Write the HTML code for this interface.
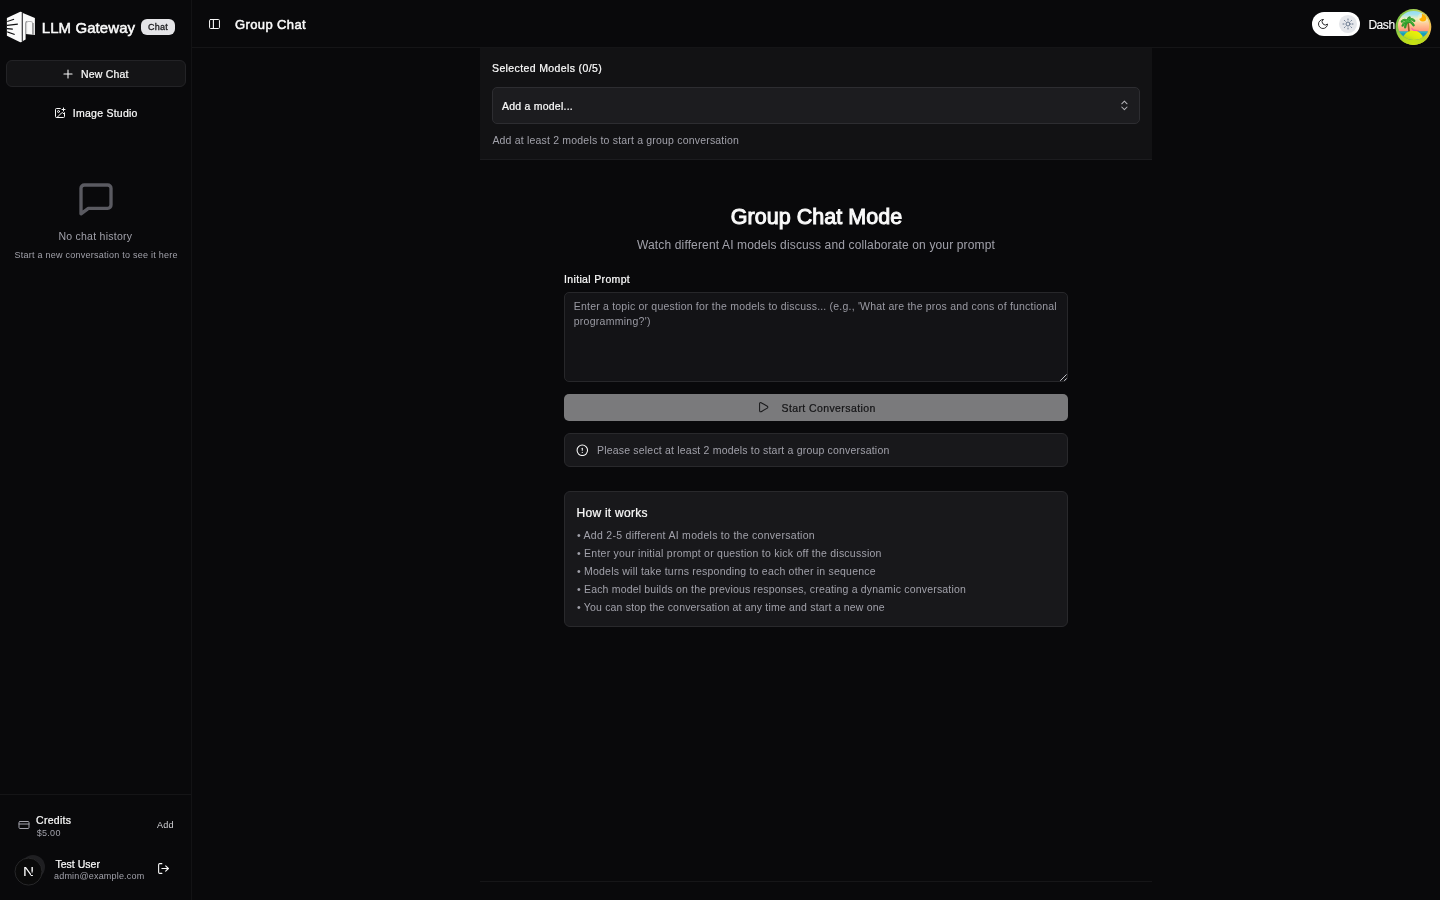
<!DOCTYPE html>
<html lang="en">
<head>
<meta charset="utf-8">
<title>Group Chat - LLM Gateway</title>
<style>
*{box-sizing:border-box;margin:0;padding:0}
html,body{width:1440px;height:900px;overflow:hidden;background:#09090b;color:#fafafa;
  font-family:"Liberation Sans",Arial,sans-serif;-webkit-font-smoothing:antialiased}
#root{position:absolute;left:0;top:0;width:1440px;height:900px;will-change:transform}
.abs{position:absolute}
.med{-webkit-text-stroke-width:0.22px}
.semi{-webkit-text-stroke-width:0.5px}
.t{position:absolute;white-space:nowrap;line-height:1}
.muted{color:#a1a1aa}
svg{display:block}
/* sidebar */
#sidebar{position:absolute;left:0;top:0;width:192px;height:900px;border-right:1px solid #131315;background:#09090b}
#header{position:absolute;left:192px;top:0;width:1248px;height:48px;border-bottom:1px solid #151517}
.badge{position:absolute;left:141px;top:18.7px;width:33.7px;height:16.3px;border-radius:6px;background:#e4e4e7;color:#202023;letter-spacing:0.3px;padding-left:0.3px;
  font-size:9px;-webkit-text-stroke-width:0.3px;text-align:center;line-height:16px}
#newchat{position:absolute;left:6px;top:60px;width:180px;height:27px;border:1px solid #232326;border-radius:6px;background:#141416}
#panel{position:absolute;left:480px;top:48px;width:672px;height:112px;background:#121214;border-bottom:1px solid #1c1c1f}
#select{position:absolute;left:492px;top:87px;width:648px;height:37px;border:1px solid #2d2d31;border-radius:5px;background:#1c1c1f}
#ta{position:absolute;left:564px;top:292px;width:504px;height:90px;border:1px solid #27272a;border-radius:5px;background:#131316}
#startbtn{position:absolute;left:564px;top:394px;width:504px;height:27px;border-radius:5px;background:#7a7a7c}
#alert{position:absolute;left:564px;top:433px;width:504px;height:34px;border:1px solid #29292c;border-radius:6px;background:#18181b}
#how{position:absolute;left:564px;top:491px;width:504px;height:136px;border:1px solid #29292c;border-radius:6px;background:#18181b}
#botline{position:absolute;left:480px;top:881px;width:672px;height:1px;background:#161618}
#sbfoot{position:absolute;left:0;top:794px;width:191px;height:1px;background:#151517}
</style>
</head>
<body>
<div id="root">
<div id="sidebar">
  <!-- logo -->
  <svg class="abs" style="left:0;top:0" width="48" height="48" viewBox="0 0 48 48">
    <path d="M6.9 17.9 L20.2 11.8 L21.85 12 L21.85 42 L20.2 42.2 L6.9 35.7 Z" fill="#fafafa"/>
    <rect x="21.85" y="12.2" width="1.05" height="29.6" fill="#3a3a3c"/>
    <path d="M22.9 12.9 L34.9 18.1 L34.9 35 L25.6 33.9 L25.6 39.6 L22.9 40.9 Z" fill="#fafafa"/>
    <path d="M25.8 33.9 V23.2 Q25.8 21.6 27.4 21.5" fill="none" stroke="#909092" stroke-width="1.3"/>
    <path d="M27.4 21.5 H30.6 Q32.2 21.6 32.7 22.8" fill="none" stroke="#b4b4b6" stroke-width="1.1"/>
    <path d="M32.95 23 V34.8" fill="none" stroke="#7c7c7e" stroke-width="1.4"/>
    <path d="M26.7 33.9 V23.4 Q26.7 22.4 27.6 22.4" fill="none" stroke="#d4d4d6" stroke-width="0.8"/>
    <g fill="#0c0c0e">
      <path d="M7.2 20.9 L13.9 18.7 L14.2 19.7 L7.2 22.1 Z"/>
      <path d="M7.0 24.7 L17.8 23.6 L17.9 24.8 L7.0 26.0 Z"/>
      <path d="M7.0 28.0 L12.8 28.5 L12.8 29.7 L7.0 29.2 Z"/>
      <path d="M7.2 31.2 L14.9 33.9 L14.5 35.0 L7.2 32.6 Z"/>
    </g>
  </svg>
  <div class="t semi" style="left:41.8px;top:20px;font-size:15px;letter-spacing:0.07px">LLM Gateway</div>
  <div class="badge">Chat</div>

  <div id="newchat"></div>
  <svg class="abs" style="left:61.4px;top:67px" width="14" height="14" viewBox="0 0 24 24" fill="none" stroke="#fafafa" stroke-width="1.8" stroke-linecap="round"><path d="M5 12h14M12 5v14"/></svg>
  <div class="t med" style="left:81px;top:69px;font-size:10.5px;letter-spacing:0.186px">New Chat</div>

  <svg class="abs" style="left:54px;top:106.7px" width="12" height="12" viewBox="0 0 24 24" fill="none" stroke="#fafafa" stroke-width="2" stroke-linecap="round" stroke-linejoin="round"><path d="M16 5h6"/><path d="M19 2v6"/><path d="M21 11.5V19a2 2 0 0 1-2 2H5a2 2 0 0 1-2-2V5a2 2 0 0 1 2-2h7.5"/><path d="m21 15-3.086-3.086a2 2 0 0 0-2.828 0L6 21"/><circle cx="9" cy="9" r="2"/></svg>
  <div class="t med" style="left:72.8px;top:108px;font-size:10.5px;letter-spacing:0.254px">Image Studio</div>

  <svg class="abs" style="left:76px;top:179.5px" width="40" height="40" viewBox="0 0 24 24" fill="none" stroke="#5a5a61" stroke-width="2" stroke-linecap="round" stroke-linejoin="round"><path d="M21 15a2 2 0 0 1-2 2H7.4l-4.4 3.3V5a2 2 0 0 1 2-2h14a2 2 0 0 1 2 2z"/></svg>
  <div class="t muted" style="left:58.4px;top:231px;font-size:10.5px;letter-spacing:0.257px">No chat history</div>
  <div class="t muted" style="left:14.4px;top:250.9px;font-size:9px;letter-spacing:0.253px">Start a new conversation to see it here</div>

  <div id="sbfoot"></div>
  <svg class="abs" style="left:18px;top:819px" width="12" height="12" viewBox="0 0 24 24" fill="none" stroke="#a1a1aa" stroke-width="2" stroke-linecap="round" stroke-linejoin="round"><rect width="20" height="14" x="2" y="5" rx="2"/><line x1="2" x2="22" y1="10" y2="10"/></svg>
  <div class="t med" style="left:36px;top:814.5px;font-size:10.5px;letter-spacing:0.3px">Credits</div>
  <div class="t muted" style="left:36.7px;top:829px;font-size:9px;letter-spacing:0.3px">$5.00</div>
  <div class="t" style="left:157px;top:821px;font-size:9px;color:#d4d4d8;letter-spacing:0.3px">Add</div>

  <div class="abs" style="left:21px;top:855px;width:24px;height:24px;border-radius:50%;background:#1f1f22"></div>
  <svg class="abs" style="left:10px;top:852px" width="40" height="40" viewBox="10 852 40 40">
    <circle cx="28.5" cy="871.6" r="13.5" fill="#0a0a0a" stroke="#2a2a2c" stroke-width="0.9"/>
  </svg>
  <div class="t" id="nlogo" style="left:23px;top:865px;font-size:13px;color:#fff;transform-origin:0 0;transform:scaleX(1.18)">N</div>
  <div class="abs" style="left:31px;top:870.5px;width:3.2px;height:4.6px;background:linear-gradient(to bottom,rgba(10,10,10,0),rgba(10,10,10,1) 70%)"></div>
  <div class="t med" style="left:55.4px;top:858.5px;font-size:10.5px;letter-spacing:0.024px">Test User</div>
  <div class="t muted" style="left:54px;top:872px;font-size:9px;letter-spacing:0.187px">admin@example.com</div>
  <svg class="abs" style="left:157px;top:862px" width="13" height="13" viewBox="0 0 24 24" fill="none" stroke="#fafafa" stroke-width="2" stroke-linecap="round" stroke-linejoin="round"><path d="M9 21H5a2 2 0 0 1-2-2V5a2 2 0 0 1 2-2h4"/><polyline points="16 17 21 12 16 7"/><line x1="21" x2="9" y1="12" y2="12"/></svg>
</div>

<div id="header">
  <svg class="abs" style="left:16px;top:18px" width="14" height="12" viewBox="0 0 14 12" fill="none" stroke="#fafafa" stroke-width="1" stroke-linecap="round" stroke-linejoin="round"><rect x="1.55" y="1.5" width="9.9" height="9" rx="1"/><path d="M5.4 1.5v9" stroke-width="1.1"/></svg>
  <div class="t semi" style="left:43.0px;top:18px;font-size:13px;letter-spacing:0.389px">Group Chat</div>
</div>

<!-- theme toggle -->
<div class="abs" style="left:1311.5px;top:11.8px;width:48.3px;height:24.2px;border-radius:12.1px;background:#fff"></div>
<div class="abs" style="left:1339.1px;top:15.1px;width:17.8px;height:17.8px;border-radius:50%;background:#e5e7eb"></div>
<svg class="abs" style="left:1317px;top:17.9px" width="12" height="12" viewBox="0 0 24 24" fill="none" stroke="#18181b" stroke-width="1.8" stroke-linecap="round" stroke-linejoin="round"><path d="M12 3a6 6 0 0 0 9 9 9 9 0 1 1-9-9Z"/></svg>
<svg class="abs" style="left:1342px;top:18px" width="12" height="12" viewBox="0 0 24 24" fill="none" stroke="#64748b" stroke-width="2" stroke-linecap="round" stroke-linejoin="round"><circle cx="12" cy="12" r="4"/><path d="M12 2v2"/><path d="M12 20v2"/><path d="m4.93 4.93 1.41 1.41"/><path d="m17.66 17.66 1.41 1.41"/><path d="M2 12h2"/><path d="M20 12h2"/><path d="m6.34 17.66-1.41 1.41"/><path d="m19.07 4.93-1.41 1.41"/></svg>
<div class="t" style="left:1368.4px;top:18.7px;font-size:12px;letter-spacing:-0.45px;-webkit-text-stroke-width:0.15px">Dash</div>
<!-- avatar -->
<svg class="abs" style="left:1390px;top:4px" width="46" height="46" viewBox="0 0 46 46">
  <defs>
    <linearGradient id="ring" x1="0" y1="0.2" x2="1" y2="0.5"><stop offset="0" stop-color="#74bf3c"/><stop offset="0.45" stop-color="#a9d45a"/><stop offset="1" stop-color="#f4bf52"/></linearGradient>
    <radialGradient id="ringb" cx="0.5" cy="1" r="0.6"><stop offset="0" stop-color="#c9e30e"/><stop offset="0.6" stop-color="#b4db1e" stop-opacity="0.9"/><stop offset="1" stop-color="#b4db1e" stop-opacity="0"/></radialGradient>
    <linearGradient id="sky" x1="0" y1="7" x2="0" y2="36" gradientUnits="userSpaceOnUse"><stop offset="0" stop-color="#93dcf2"/><stop offset="0.12" stop-color="#a6e3ee"/><stop offset="0.26" stop-color="#eef0c0"/><stop offset="0.45" stop-color="#ffc998"/><stop offset="0.68" stop-color="#ff9a7c"/></linearGradient>
    <linearGradient id="isl" x1="0.8" y1="0" x2="0.2" y2="1"><stop offset="0" stop-color="#f8f400"/><stop offset="0.42" stop-color="#d6e812"/><stop offset="0.85" stop-color="#90c926"/></linearGradient>
    <clipPath id="avc"><ellipse cx="23.6" cy="21.6" rx="15.6" ry="14.5"/></clipPath>
    <mask id="sunm"><rect x="26" y="6" width="14" height="14" fill="#fff"/><circle cx="28.7" cy="11.6" r="3.3" fill="#000"/></mask>
  </defs>
  <circle cx="23.4" cy="23" r="17.9" fill="url(#ring)"/>
  <circle cx="23.4" cy="23" r="17.9" fill="url(#ringb)"/>
  <g clip-path="url(#avc)">
    <rect x="0" y="0" width="46" height="46" fill="url(#sky)"/>
    <circle cx="32.6" cy="13.7" r="4.9" fill="#fff3c4" opacity="0.45"/>
    <circle cx="32.9" cy="13.7" r="3.7" fill="#ffb000" mask="url(#sunm)"/>
    <rect x="8" y="27.6" width="30" height="10" fill="#1b9ab6"/>
    <path d="M8 27.6 H38 V29.2 H8Z" fill="#27b3c4"/>
    <ellipse cx="23" cy="34.6" rx="9.9" ry="8" fill="url(#isl)"/>
    <path d="M18.2 27.4 L17.3 18.5 L18.9 18.3 L19.9 27.2 Z" fill="#9a5a26"/>
    <g fill="none" stroke="#2f9a2c" stroke-width="2.4" stroke-linecap="round">
      <path d="M17.9 17.4 Q14.5 14.2 11.9 17.6"/>
      <path d="M17.9 17.6 Q14 17.8 12.6 21.6"/>
      <path d="M17.9 17.8 Q15.4 19.5 15.2 23.2"/>
      <path d="M17.9 17.2 Q17.6 14.6 19.6 13.6"/>
      <path d="M17.9 17.2 Q21.5 13.6 24.2 16.8"/>
      <path d="M17.9 17.6 Q21.8 17.4 23.6 21.2"/>
    </g>
    <g fill="none" stroke="#4dbb3c" stroke-width="1" stroke-linecap="round" opacity="0.9">
      <path d="M17.6 16.8 Q14.6 14 12.3 16.6"/>
      <path d="M17.4 17.4 Q14.2 17.4 12.8 20.4"/>
      <path d="M18.2 16.6 Q21.4 13.4 23.8 16"/>
      <path d="M18.4 17.2 Q21.6 17 23.2 20"/>
      <path d="M17.9 16.6 Q17.8 14.8 19.3 13.9"/>
    </g>
    <path d="M21.6 23.4 L23.6 25.6 L28.8 26.2 L29.2 27.3 L23.2 26.9 L21.2 24.2 Z" fill="#ff5ea6"/>
  </g>
</svg>

<!-- main -->
<div id="panel"></div>
<div class="t med" style="left:492.0px;top:63px;font-size:10.5px;letter-spacing:0.376px">Selected Models (0/5)</div>
<div id="select"></div>
<div class="t med" style="left:502px;top:101px;font-size:10.5px;letter-spacing:0.231px">Add a model...</div>
<svg class="abs" style="left:1117.9px;top:99.3px" width="12.8" height="12.8" viewBox="0 0 24 24" fill="none" stroke="#b4b4b8" stroke-width="1.9" stroke-linecap="round" stroke-linejoin="round"><path d="m7 15 5 5 5-5"/><path d="m7 9 5-5 5 5"/></svg>
<div class="t muted" style="left:492.4px;top:135px;font-size:10.5px;letter-spacing:0.19px">Add at least 2 models to start a group conversation</div>

<div class="t" style="left:730.7px;top:207px;font-size:21.5px;-webkit-text-stroke-width:1px;letter-spacing:0.038px">Group Chat Mode</div>
<div class="t muted" style="left:637.0px;top:239px;font-size:12px;letter-spacing:0.143px">Watch different AI models discuss and collaborate on your prompt</div>

<div class="t med" style="left:564px;top:274px;font-size:10.5px;letter-spacing:0.346px">Initial Prompt</div>
<div id="ta"></div>
<div class="t muted" style="left:573.75px;top:301px;font-size:10.5px;letter-spacing:0.206px;color:#9a9aa3">Enter a topic or question for the models to discuss... (e.g., 'What are the pros and cons of functional</div>
<div class="t muted" style="left:573.75px;top:316px;font-size:10.5px;letter-spacing:0.269px;color:#9a9aa3">programming?')</div>
<svg class="abs" style="left:1059px;top:373px" width="8" height="8" viewBox="0 0 8 8" stroke="#d6d6da" stroke-width="0.9" fill="none"><path d="M1.2 7.8 L7.6 1.4"/><path d="M5.2 7.8 L7.6 5.4"/></svg>

<div id="startbtn"></div>
<svg class="abs" style="left:756.8px;top:401.2px" width="12.4" height="12.4" viewBox="0 0 24 24" fill="none" stroke="#1a1a1c" stroke-width="2" stroke-linecap="round" stroke-linejoin="round"><path d="M5 5a2 2 0 0 1 3.008-1.728l11.997 6.998a2 2 0 0 1 .003 3.458l-12 7A2 2 0 0 1 5 19z"/></svg>
<div class="t med" style="left:781.5px;top:403px;font-size:10.5px;color:#141416;letter-spacing:0.4px">Start Conversation</div>

<div id="alert"></div>
<svg class="abs" style="left:576.2px;top:443.6px" width="12.6" height="12.6" viewBox="0 0 24 24" fill="none" stroke="#fafafa" stroke-width="2" stroke-linecap="round" stroke-linejoin="round"><circle cx="12" cy="12" r="10"/><line x1="12" x2="12" y1="8" y2="12"/><line x1="12" x2="12.01" y1="16" y2="16"/></svg>
<div class="t muted" style="left:597.0px;top:445px;font-size:10.5px;letter-spacing:0.192px">Please select at least 2 models to start a group conversation</div>

<div id="how"></div>
<div class="t med" style="left:576.5px;top:506.8px;font-size:12px;letter-spacing:0.273px">How it works</div>
<div class="t muted" style="left:577.0px;top:530px;font-size:10.5px;letter-spacing:0.282px">• Add 2-5 different AI models to the conversation</div>
<div class="t muted" style="left:577.0px;top:548px;font-size:10.5px;letter-spacing:0.239px">• Enter your initial prompt or question to kick off the discussion</div>
<div class="t muted" style="left:577.0px;top:566px;font-size:10.5px;letter-spacing:0.216px">• Models will take turns responding to each other in sequence</div>
<div class="t muted" style="left:577.0px;top:584px;font-size:10.5px;letter-spacing:0.181px">• Each model builds on the previous responses, creating a dynamic conversation</div>
<div class="t muted" style="left:577.0px;top:602px;font-size:10.5px;letter-spacing:0.185px">• You can stop the conversation at any time and start a new one</div>

<div id="botline"></div>
</div>
</body>
</html>
